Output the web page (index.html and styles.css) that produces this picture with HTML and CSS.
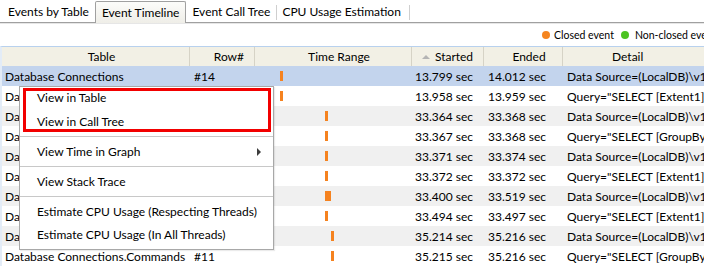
FILE: index.html
```html
<!DOCTYPE html>
<html lang="en">
<head>
    <meta charset="UTF-8">
    <title>Event Timeline</title>
    <link rel="stylesheet" href="styles.css">
</head>
<body>

    <!-- Tabs -->
    <div class="tabs">
        <div class="tab">Events by Table</div>
        <div class="tab active">Event Timeline</div>
        <div class="tab">Event Call Tree</div>
        <div class="tab">CPU Usage Estimation</div>
    </div>

    <!-- Legend -->
    <div class="legend">
        <span class="dot orange"></span><span class="legend-text">Closed event</span>
        <span class="dot green"></span><span class="legend-text">Non-closed event</span>
    </div>

    <!-- Grid -->
    <div class="grid">
        <div class="row head">
            <div class="cell c-table">Table</div>
            <div class="cell c-row">Row#</div>
            <div class="cell c-range">Time Range</div>
            <div class="cell c-start"><span class="sort"></span>Started</div>
            <div class="cell c-end">Ended</div>
            <div class="cell c-detail">Detail</div>
        </div>

        <div class="row selected">
            <div class="cell c-table">Database Connections</div>
            <div class="cell c-row">#14</div>
            <div class="cell c-range"><span class="bar" style="margin-left:25px"></span></div>
            <div class="cell c-start">13.799 sec</div>
            <div class="cell c-end">14.012 sec</div>
            <div class="cell c-detail">Data Source=(LocalDB)\v11.0</div>
        </div>
        <div class="row">
            <div class="cell c-table">Database Connections.Commands</div>
            <div class="cell c-row">#14</div>
            <div class="cell c-range"><span class="bar" style="margin-left:25px"></span></div>
            <div class="cell c-start">13.958 sec</div>
            <div class="cell c-end">13.959 sec</div>
            <div class="cell c-detail">Query="SELECT [Extent1].[Id]</div>
        </div>
        <div class="row alt">
            <div class="cell c-table">Database Connections</div>
            <div class="cell c-row">#12</div>
            <div class="cell c-range"><span class="bar" style="margin-left:70px"></span></div>
            <div class="cell c-start">33.364 sec</div>
            <div class="cell c-end">33.368 sec</div>
            <div class="cell c-detail">Data Source=(LocalDB)\v11.0</div>
        </div>
        <div class="row">
            <div class="cell c-table">Database Connections.Commands</div>
            <div class="cell c-row">#12</div>
            <div class="cell c-range"><span class="bar" style="margin-left:70px"></span></div>
            <div class="cell c-start">33.367 sec</div>
            <div class="cell c-end">33.368 sec</div>
            <div class="cell c-detail">Query="SELECT [GroupBy1].[A1]</div>
        </div>
        <div class="row alt">
            <div class="cell c-table">Database Connections</div>
            <div class="cell c-row">#13</div>
            <div class="cell c-range"><span class="bar" style="margin-left:70px"></span></div>
            <div class="cell c-start">33.371 sec</div>
            <div class="cell c-end">33.374 sec</div>
            <div class="cell c-detail">Data Source=(LocalDB)\v11.0</div>
        </div>
        <div class="row">
            <div class="cell c-table">Database Connections.Commands</div>
            <div class="cell c-row">#13</div>
            <div class="cell c-range"><span class="bar" style="margin-left:70px"></span></div>
            <div class="cell c-start">33.372 sec</div>
            <div class="cell c-end">33.372 sec</div>
            <div class="cell c-detail">Query="SELECT [Extent1].[Id]</div>
        </div>
        <div class="row alt">
            <div class="cell c-table">Database Connections</div>
            <div class="cell c-row">#10</div>
            <div class="cell c-range"><span class="bar" style="margin-left:70px;width:6px"></span></div>
            <div class="cell c-start">33.400 sec</div>
            <div class="cell c-end">33.519 sec</div>
            <div class="cell c-detail">Data Source=(LocalDB)\v11.0</div>
        </div>
        <div class="row">
            <div class="cell c-table">Database Connections.Commands</div>
            <div class="cell c-row">#10</div>
            <div class="cell c-range"><span class="bar" style="margin-left:70px"></span></div>
            <div class="cell c-start">33.494 sec</div>
            <div class="cell c-end">33.497 sec</div>
            <div class="cell c-detail">Query="SELECT [Extent1].[Id]</div>
        </div>
        <div class="row alt">
            <div class="cell c-table">Database Connections</div>
            <div class="cell c-row">#11</div>
            <div class="cell c-range"><span class="bar" style="margin-left:76px"></span></div>
            <div class="cell c-start">35.214 sec</div>
            <div class="cell c-end">35.216 sec</div>
            <div class="cell c-detail">Data Source=(LocalDB)\v11.0</div>
        </div>
        <div class="row">
            <div class="cell c-table">Database Connections.Commands</div>
            <div class="cell c-row">#11</div>
            <div class="cell c-range"><span class="bar" style="margin-left:76px"></span></div>
            <div class="cell c-start">35.215 sec</div>
            <div class="cell c-end">35.216 sec</div>
            <div class="cell c-detail">Query="SELECT [GroupBy1].[A1]</div>
        </div>
    </div>

    <!-- Context menu -->
    <div class="menu">
        <div class="menu-item first">View in Table</div>
        <div class="menu-item">View in Call Tree</div>
        <div class="menu-sep"></div>
        <div class="menu-item">View Time in Graph<span class="arrow"></span></div>
        <div class="menu-sep"></div>
        <div class="menu-item">View Stack Trace</div>
        <div class="menu-sep"></div>
        <div class="menu-item">Estimate CPU Usage (Respecting Threads)</div>
        <div class="menu-item">Estimate CPU Usage (In All Threads)</div>
    </div>

    <!-- Red annotation box drawn over the menu -->
    <div class="mark"></div>

</body>
</html>
```

FILE: styles.css
```css
/* General */
body {
    margin: 0;
    font-family: "Lato", "Noto Sans", sans-serif;
    font-size: 12px;
    color: #000;
    background: #fff;
    width: 704px;
    height: 267px;
    overflow: hidden;
    position: relative;
}

/* Tabs */
.tabs {
    display: flex;
    height: 22px;
    border-bottom: 1px solid #a0a0a0;
    box-shadow: 0 1px 0 #e6e6e6;
    padding-left: 2px;
}

.tab {
    padding: 0 6px;
    height: 20px;
    line-height: 20px;
    margin-top: 2px;
    position: relative;
    white-space: nowrap;
}

.tab + .tab::before {
    content: "";
    position: absolute;
    left: 0;
    top: 3px;
    height: 15px;
    border-left: 1px solid #cfcfcf;
}

.tab:last-child {
    padding-right: 9px;
}

.tab:last-child::after {
    content: "";
    position: absolute;
    right: 0;
    top: 3px;
    height: 15px;
    border-left: 1px solid #cfcfcf;
}

.tab.active {
    background: linear-gradient(#fcfcfa, #efeee8);
    border: 1px solid #a0a0a0;
    border-bottom: none;
    border-radius: 2px 2px 0 0;
    height: 21px;
    line-height: 21px;
    margin-top: 1px;
    margin-bottom: -1px;
}

.tab.active::before,
.tab.active + .tab::before {
    display: none;
}

/* Legend */
.legend {
    display: flex;
    align-items: center;
    height: 23px;
    padding-left: 542px;
    white-space: nowrap;
    font-size: 10.5px;
}

.dot {
    flex-shrink: 0;
    width: 8px;
    height: 8px;
    border-radius: 50%;
    margin-right: 4px;
}

.legend-text { flex-shrink: 0; }

.dot.orange { background: #f5851f; }
.dot.green { background: #4cc321; margin-left: 7px; margin-right: 6px; }

/* Grid */
.grid {
    border-top: 1px solid #b8d1ee;
    border-left: 2px solid #e3ecf7;
}

.row {
    display: grid;
    grid-template-columns: 188px 65px 157px 72px 79px 1fr;
    height: 20px;
    align-items: center;
    white-space: nowrap;
}

.row.head {
    background: #f2f0e5;
    height: 19px;
}

.row.head .cell {
    border-right: 1px solid #d6d3c6;
    height: 19px;
    line-height: 19px;
    text-align: center;
    padding-left: 12px;
}

.row.head .c-row {
    text-align: right;
    padding-right: 10px;
}

.row.head .c-start {
    padding-left: 0;
}

.row.head .c-detail {
    border-right: none;
    text-align: left;
    padding-left: 49px;
}

.row.selected { background: #c3d4ed; }
.row.alt { background: #f0f0f0; }

.cell {
    overflow: hidden;
    box-sizing: border-box;
}

.c-table { padding-left: 3px; }
.c-row { padding-left: 4px; }
.c-start { padding-left: 3px; }
.c-end { padding-left: 4px; }
.c-detail { padding-left: 4px; }

.sort {
    display: inline-block;
    width: 0;
    height: 0;
    border-left: 4px solid transparent;
    border-right: 4px solid transparent;
    border-bottom: 4px solid #b4b4b4;
    margin-right: 5px;
    vertical-align: 2px;
}

.bar {
    display: block;
    width: 3px;
    height: 10px;
    background: #f5821f;
}

/* Context menu */
.menu {
    position: absolute;
    left: 19px;
    top: 86px;
    width: 253px;
    background: #fff;
    border: 1px solid #a8a8a8;
    padding: 0 0 3px 0;
    box-shadow: 1px 1px 1px rgba(0, 0, 0, 0.08);
}

.menu-item {
    height: 23px;
    line-height: 23px;
    padding-left: 17px;
    white-space: nowrap;
    position: relative;
}

.menu-item.first {
    line-height: 21px;
}

.menu-sep {
    border-top: 1px solid #c8c8c8;
    margin: 3px 0;
}

.arrow {
    position: absolute;
    right: 12px;
    top: 8px;
    border-left: 4px solid #3c3c3c;
    border-top: 4px solid transparent;
    border-bottom: 4px solid transparent;
}

/* Annotation */
.mark {
    position: absolute;
    left: 23px;
    top: 88px;
    width: 242px;
    height: 38px;
    border: 3px solid #f20000;
}
```
